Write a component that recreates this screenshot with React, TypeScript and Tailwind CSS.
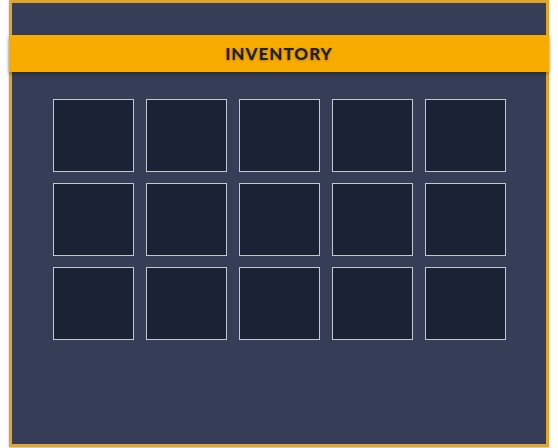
import React from 'react';

const App: React.FC = () => {
  const slots = Array.from({ length: 15 });

  return (
    <div className="w-[558px] h-[448px] bg-white overflow-hidden" style={{ fontFamily: 'Lato, "Noto Sans", sans-serif' }}>
      <div className="ml-[9px] w-[540px] h-[447px] bg-[#353e56] border-[3px] border-[#e0a62a] shadow-[0_1px_2px_rgba(0,0,0,0.3)] flex flex-col">
        <div className="-mx-[3px] mt-[32px] h-[37px] bg-[#f9ac00] shadow-[0_2px_4px_rgba(0,0,0,0.35)] flex items-center justify-center">
          <span className="text-[17px] font-black tracking-[0.06em] text-[#1c2236] [text-shadow:0_1px_3px_rgba(0,0,0,0.25)]">
            INVENTORY
          </span>
        </div>
        <div className="mt-[27px] mx-auto grid grid-cols-[repeat(5,81px)] gap-x-[12px] gap-y-[11px]">
          {slots.map((_, i) => (
            <div key={i} className="w-[81px] h-[73px] bg-[#1c2236] border border-[#c3c7d0]"></div>
          ))}
        </div>
      </div>
    </div>
  );
};

export default App;
